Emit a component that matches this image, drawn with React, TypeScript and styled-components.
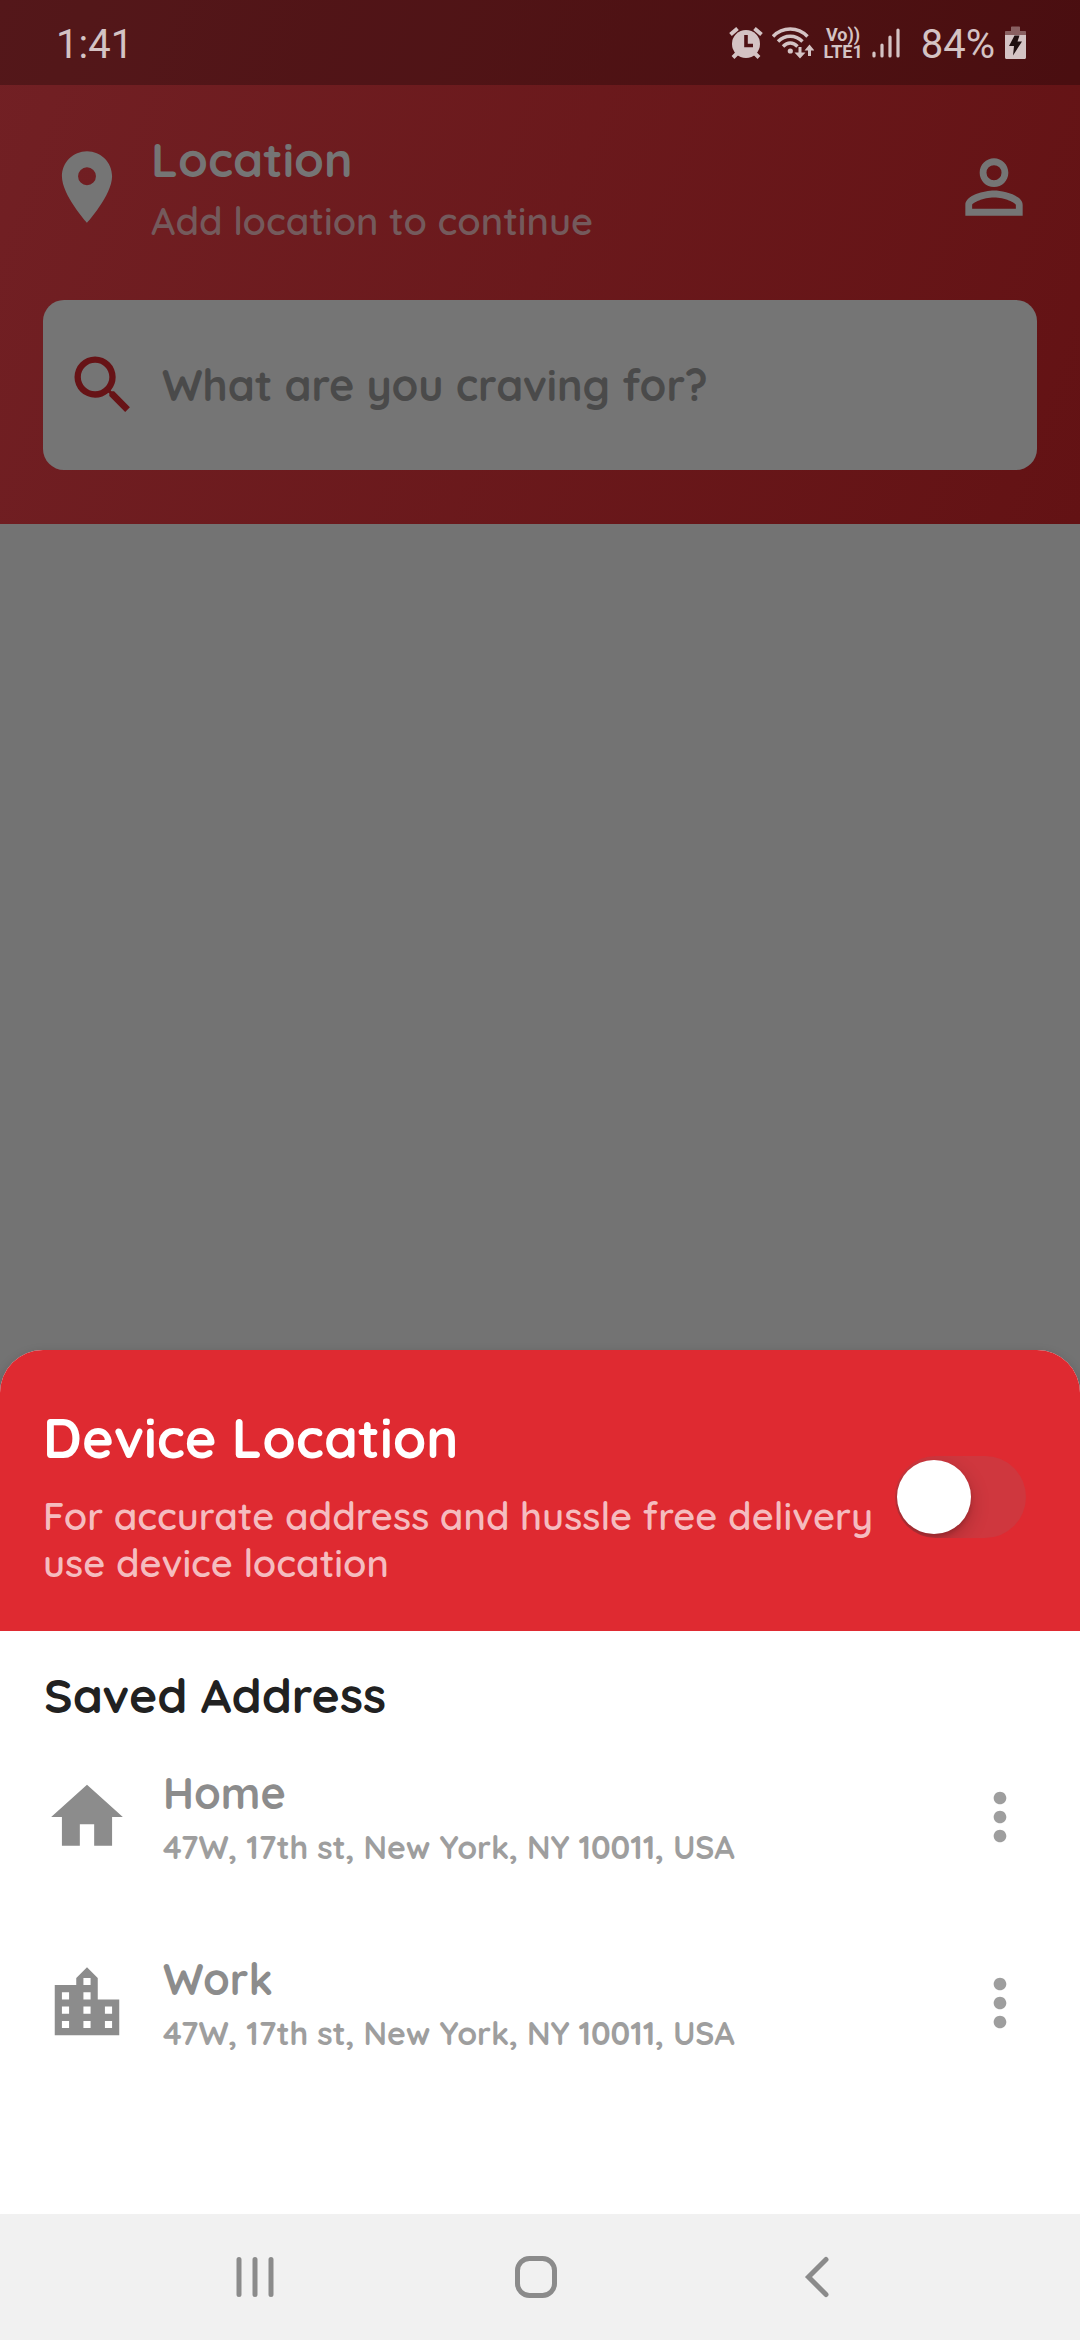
import { useState } from "react";
import styled, { createGlobalStyle } from "styled-components";

const GlobalStyle = createGlobalStyle`
  *, *::before, *::after { box-sizing: border-box; }
  body {
    margin: 0;
    background: #737373;
    font-family: Quicksand, Lato, "Open Sans", sans-serif;
  }
  h1, h2, h3, p, ul { margin: 0; padding: 0; }
  button { border: 0; padding: 0; background: none; color: inherit; cursor: pointer; }
  svg { display: block; flex: none; }
`;

const Screen = styled.div`
  display: flex;
  flex-direction: column;
  min-height: 100vh;
  background: #737373;
`;

const TopArea = styled.header`
  background: linear-gradient(110deg, #722024 0%, #631214 100%);
`;

const StatusBar = styled.div`
  display: flex;
  align-items: center;
  justify-content: space-between;
  height: 85px;
  padding: 0 54px 0 56px;
  background: rgba(0, 0, 0, 0.26);
  color: #d4c3c4;
  font-family: Roboto, sans-serif;
`;

const StatusIcons = styled.div`
  display: flex;
  align-items: center;
  gap: 9px;
`;

const StatusText = styled.span`
  padding-top: 4px;
  font-size: 40px;
  line-height: 48px;
`;

const Carrier = styled.span`
  display: flex;
  flex-direction: column;
  align-items: center;
  font-size: 18px;
  font-weight: 700;
  line-height: 17px;
`;

const BatteryLevel = styled(StatusText)`
  padding-right: 1px;
  padding-left: 12px;
`;

const LocationRow = styled.div`
  display: flex;
  align-items: center;
  gap: 21px;
  padding: 44px 43px 0 44px;
  color: #757575;
`;

const TextStack = styled.div<{ $gap: number }>`
  display: flex;
  flex: 1;
  flex-direction: column;
  gap: ${(p) => p.$gap}px;
  min-width: 0;
`;

const LocationTitle = styled.h1`
  font-size: 48px;
  font-weight: 700;
  line-height: 60px;
`;

const Caption = styled.p<{ $color: string }>`
  color: ${(p) => p.$color};
  font-size: 38px;
  font-weight: 600;
  line-height: 47px;
`;

const IconButton = styled.button`
  display: flex;
  flex: none;
`;

const SearchWrap = styled.div`
  padding: 55px 43px 54px;
`;

const SearchBox = styled.label`
  display: flex;
  align-items: center;
  gap: 21px;
  height: 170px;
  padding: 0 22px;
  border-radius: 21px;
  background: #757575;
  color: #671316;
`;

const SearchInput = styled.input`
  flex: 1;
  min-width: 0;
  padding: 0;
  border: 0;
  outline: 0;
  background: none;
  color: #4a4a4a;
  font-family: inherit;
  font-size: 43px;
  font-weight: 700;
  line-height: 52px;

  &::placeholder { color: #4a4a4a; opacity: 1; }
`;

const Backdrop = styled.div`
  flex: 1;
`;

const Sheet = styled.section`
  overflow: hidden;
  border-radius: 43px 43px 0 0;
  background: #ffffff;
  box-shadow: 0 4px 12px rgba(0, 0, 0, 0.2);
`;

const DevicePanel = styled.div`
  display: flex;
  align-items: center;
  gap: 12px;
  padding: 56px 54px 44px 43px;
  background: #df2a31;
`;

const DeviceTitle = styled.h2`
  color: #ffffff;
  font-size: 54px;
  font-weight: 700;
  line-height: 64px;
`;

const Toggle = styled.input`
  flex: none;
  width: 131px;
  height: 82px;
  margin: 0;
  padding: 4px 2px;
  overflow: hidden;
  border-radius: 41px;
  background: #cf373e;
  appearance: none;
  cursor: pointer;

  &::before {
    display: block;
    width: 74px;
    height: 74px;
    border-radius: 50%;
    background: #ffffff;
    box-shadow: 0 7px 20px rgba(0, 0, 0, 0.2), 0 3px 4px rgba(0, 0, 0, 0.15);
    content: "";
  }

  &:checked::before { margin-left: auto; }
`;

const SavedArea = styled.div`
  padding: 34px 42px 161px 44px;
`;

const SavedTitle = styled.h2`
  color: #212121;
  font-size: 48px;
  font-weight: 700;
  line-height: 60px;
`;

const AddressList = styled.ul`
  display: flex;
  flex-direction: column;
  gap: 86px;
  padding-top: 42px;
  list-style: none;
`;

const AddressRow = styled.li`
  display: flex;
  align-items: center;
  gap: 33px;
  color: #8c8c8c;
`;

const AddressName = styled.h3`
  font-size: 43px;
  font-weight: 700;
  line-height: 52px;
`;

const AddressText = styled.p`
  color: #9e9e9e;
  font-size: 32px;
  font-weight: 700;
  line-height: 40px;
`;

const MenuButton = styled(IconButton)`
  color: #9e9e9e;
`;

const NavBar = styled.nav`
  display: grid;
  grid-template-columns: repeat(3, 1fr);
  height: 126px;
  padding: 0 122px 0 114px;
  background: #f1f1f1;
  color: #8b8b8b;
`;

const NavButton = styled.button`
  display: flex;
  align-items: center;
  justify-content: center;
`;

function Glyph({ d, size }: { d: string; size: number }) {
  return (
    <svg width={size} height={size} viewBox="0 0 24 24" fill="currentColor" aria-hidden="true">
      <path d={d} />
    </svg>
  );
}

const glyphs = {
  place:
    "M12 2C8.13 2 5 5.13 5 9c0 5.25 7 13 7 13s7-7.75 7-13c0-3.87-3.13-7-7-7zm0 9.5a2.5 2.5 0 0 1 0-5 2.5 2.5 0 0 1 0 5z",
  person:
    "M12 5.9a2.1 2.1 0 1 1 0 4.2 2.1 2.1 0 0 1 0-4.2m0 9c2.97 0 6.1 1.46 6.1 2.1v1.1H5.9V17c0-.64 3.13-2.1 6.1-2.1M12 4C9.79 4 8 5.79 8 8s1.79 4 4 4 4-1.79 4-4-1.79-4-4-4zm0 9c-2.67 0-8 1.34-8 4v3h16v-3c0-2.66-5.33-4-8-4z",
  search:
    "M15.5 14h-.79l-.28-.27A6.47 6.47 0 0 0 16 9.5 6.5 6.5 0 1 0 9.5 16c1.61 0 3.09-.59 4.23-1.57l.27.28v.79l5 4.99L20.49 19l-4.99-5zm-6 0C7.01 14 5 11.99 5 9.5S7.01 5 9.5 5 14 7.01 14 9.5 11.99 14 9.5 14z",
  home: "M10 20v-6h4v6h5v-8h3L12 3 2 12h3v8z",
  city:
    "M15 11V5l-3-3-3 3v2H3v14h18V11h-6zm-8 8H5v-2h2v2zm0-4H5v-2h2v2zm0-4H5V9h2v2zm6 8h-2v-2h2v2zm0-4h-2v-2h2v2zm0-4h-2V9h2v2zm0-4h-2V5h2v2zm6 12h-2v-2h2v2zm0-4h-2v-2h2v2z",
  more:
    "M12 8c1.1 0 2-.9 2-2s-.9-2-2-2-2 .9-2 2 .9 2 2 2zm0 2c-1.1 0-2 .9-2 2s.9 2 2 2 2-.9 2-2-.9-2-2-2zm0 6c-1.1 0-2 .9-2 2s.9 2 2 2 2-.9 2-2-.9-2-2-2z",
};

function AlarmIcon() {
  return (
    <svg width="34" height="34" viewBox="0 0 34 34" aria-hidden="true">
      <circle cx="17" cy="18" r="14" fill="currentColor" />
      <g stroke="currentColor" strokeWidth="4">
        <path d="M1.5 8.5 8.5 2.5M32.5 8.5 25.5 2.5M4 31.5l5-5M30 31.5l-5-5" />
      </g>
      <path d="M17 9v10.500h7" fill="none" stroke="#4e1114" strokeWidth="3.600" />
    </svg>
  );
}

function WifiIcon() {
  return (
    <svg width="42" height="34" viewBox="0 0 42 34" aria-hidden="true">
      <g fill="none" stroke="currentColor" strokeWidth="3.400">
        <path d="M1 10.500C10.500.5 26 .5 35.500 10.500" />
        <path d="M6 15.500C13 8.500 23.500 8.500 30.500 15.500" />
        <path d="M11 20.500C15.500 15.800 21 15.800 25.500 20.500" />
      </g>
      <circle cx="18.300" cy="25" r="2.600" fill="currentColor" />
      <g fill="currentColor">
        <path d="M26.500 21h3v5.500h4L28 32.500l-5.500-6h4z" />
        <path d="M36 30h3v-5.500h3.500L37.500 18.500 32.500 24.500H36z" />
      </g>
    </svg>
  );
}

function SignalIcon() {
  return (
    <svg width="28" height="32" viewBox="0 0 28 32" stroke="currentColor" strokeWidth="3.200" strokeLinecap="round" aria-hidden="true">
      <path d="M2 26v3M10 18v11M18 10v19M26 3v26" />
    </svg>
  );
}

function BatteryIcon() {
  return (
    <svg width="21" height="34" viewBox="0 0 21 34" fill="currentColor" aria-hidden="true">
      <path d="M6 1.500C6 .8 6.400.5 7 .5h7c.6 0 1 .3 1 1V5h5c.6 0 1 .4 1 1v3H0V6c0-.6.400-1 1-1h5z" opacity="0.450" />
      <path d="M0 9h21v22.500c0 .900-.600 1.500-1.500 1.500h-18C.600 33 0 32.400 0 31.500z" />
      <path d="M9.500 9.500h5l-2 6H17L8 29.500l1-9.500H4z" fill="#1f0f10" />
    </svg>
  );
}

const addresses = [
  { name: "Home", icon: glyphs.home, text: "47W, 17th st, New York, NY 10011, USA" },
  { name: "Work", icon: glyphs.city, text: "47W, 17th st, New York, NY 10011, USA" },
];

export default function App() {
  const [deviceLocation, setDeviceLocation] = useState(false);

  return (
    <>
      <GlobalStyle />
      <Screen>
        <TopArea>
          <StatusBar>
            <StatusText>1:41</StatusText>
            <StatusIcons>
              <AlarmIcon />
              <WifiIcon />
              <Carrier>
                <span>Vo))</span>
                <span>LTE1</span>
              </Carrier>
              <SignalIcon />
              <BatteryLevel>84%</BatteryLevel>
              <BatteryIcon />
            </StatusIcons>
          </StatusBar>
          <LocationRow>
            <Glyph d={glyphs.place} size={86} />
            <TextStack $gap={9}>
              <LocationTitle>Location</LocationTitle>
              <Caption $color="#745a5c">Add location to continue</Caption>
            </TextStack>
            <IconButton type="button" aria-label="Profile">
              <Glyph d={glyphs.person} size={86} />
            </IconButton>
          </LocationRow>
          <SearchWrap>
            <SearchBox>
              <Glyph d={glyphs.search} size={76} />
              <SearchInput type="text" aria-label="Search food" placeholder="What are you craving for?" />
            </SearchBox>
          </SearchWrap>
        </TopArea>
        <Backdrop />
        <Sheet>
          <DevicePanel>
            <TextStack $gap={23}>
              <DeviceTitle id="device-location">Device Location</DeviceTitle>
              <Caption $color="#f5bcbf">
                For accurate address and hussle free delivery use device location
              </Caption>
            </TextStack>
            <Toggle
              type="checkbox"
              role="switch"
              aria-labelledby="device-location"
              checked={deviceLocation}
              onChange={(event) => setDeviceLocation(event.target.checked)}
            />
          </DevicePanel>
          <SavedArea>
            <SavedTitle>Saved Address</SavedTitle>
            <AddressList>
              {addresses.map((address) => (
                <AddressRow key={address.name}>
                  <Glyph d={address.icon} size={86} />
                  <TextStack $gap={8}>
                    <AddressName>{address.name}</AddressName>
                    <AddressText>{address.text}</AddressText>
                  </TextStack>
                  <MenuButton type="button" aria-label={`Options for ${address.name}`}>
                    <Glyph d={glyphs.more} size={76} />
                  </MenuButton>
                </AddressRow>
              ))}
            </AddressList>
          </SavedArea>
        </Sheet>
        <NavBar>
          <NavButton type="button" aria-label="Recent apps">
            <svg width="42" height="42" viewBox="0 0 42 42" stroke="currentColor" strokeWidth="5" strokeLinecap="round">
              <path d="M5 3.500v35M21 3.500v35M37 3.500v35" />
            </svg>
          </NavButton>
          <NavButton type="button" aria-label="Home screen">
            <svg width="42" height="42" viewBox="0 0 42 42" fill="none" stroke="currentColor" strokeWidth="5">
              <rect x="2.500" y="2.500" width="37" height="37" rx="12" />
            </svg>
          </NavButton>
          <NavButton type="button" aria-label="Back">
            <svg width="42" height="42" viewBox="0 0 42 42" fill="none" stroke="currentColor" strokeWidth="5" strokeLinecap="round">
              <path d="M30 3.500 12.500 21 30 38.500" />
            </svg>
          </NavButton>
        </NavBar>
      </Screen>
    </>
  );
}
